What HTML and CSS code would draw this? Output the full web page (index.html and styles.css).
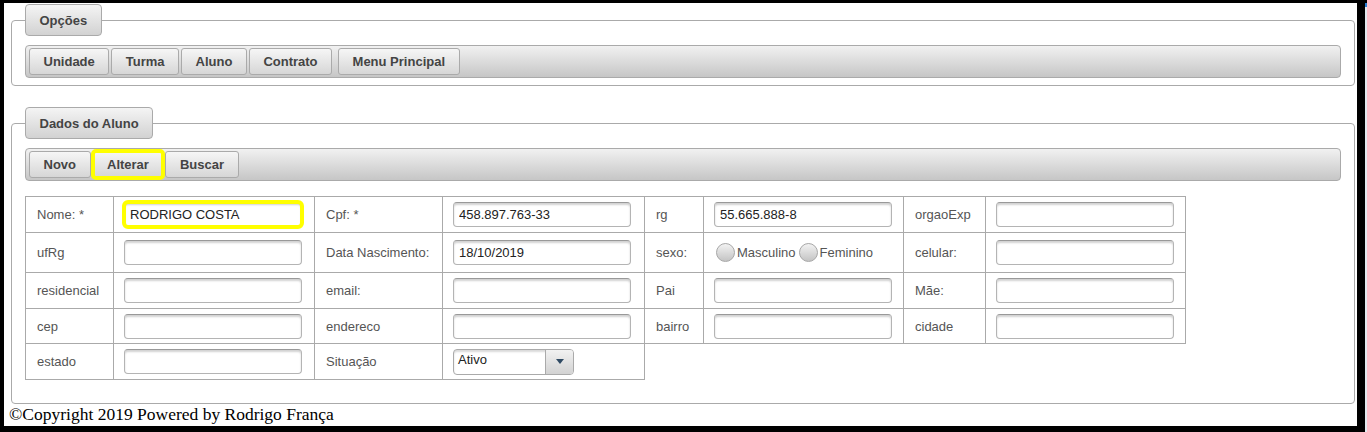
FILE: index.html
```html
<!DOCTYPE html>
<html lang="pt-BR">
<head>
<meta charset="utf-8">
<title>Dados do Aluno</title>
<link rel="stylesheet" href="styles.css">
</head>
<body>
<div class="page">
  <fieldset class="group">
    <legend class="legend">Opções</legend>
    <div class="toolbar">
      <div class="btnset">
        <button class="btn">Unidade</button>
        <button class="btn">Turma</button>
        <button class="btn">Aluno</button>
        <button class="btn">Contrato</button>
      </div>
      <button class="btn">Menu Principal</button>
    </div>
  </fieldset>

  <fieldset class="group group-dados">
    <legend class="legend">Dados do Aluno</legend>
    <div class="toolbar toolbar-dados">
      <div class="btnset">
        <button class="btn">Novo</button>
        <button class="btn btn-marked">Alterar</button>
        <button class="btn">Buscar</button>
      </div>
    </div>

    <table class="form-table">
      <colgroup>
        <col class="c1"><col class="c2"><col class="c3"><col class="c4">
        <col class="c5"><col class="c6"><col class="c7"><col class="c8">
      </colgroup>
      <tr class="r1">
        <td class="lbl">Nome: *</td>
        <td class="fld"><input class="txt txt-marked" type="text" value="RODRIGO COSTA"></td>
        <td class="lbl">Cpf: *</td>
        <td class="fld"><input class="txt" type="text" value="458.897.763-33"></td>
        <td class="lbl">rg</td>
        <td class="fld"><input class="txt" type="text" value="55.665.888-8"></td>
        <td class="lbl">orgaoExp</td>
        <td class="fld"><input class="txt" type="text" value=""></td>
      </tr>
      <tr class="r2">
        <td class="lbl">ufRg</td>
        <td class="fld"><input class="txt" type="text" value=""></td>
        <td class="lbl">Data Nascimento:</td>
        <td class="fld"><input class="txt" type="text" value="18/10/2019"></td>
        <td class="lbl">sexo:</td>
        <td class="fld">
          <span class="radios">
            <span class="radio"></span><span class="radio-text">Masculino</span>
            <span class="radio radio-second"></span><span class="radio-text">Feminino</span>
          </span>
        </td>
        <td class="lbl">celular:</td>
        <td class="fld"><input class="txt" type="text" value=""></td>
      </tr>
      <tr class="r3">
        <td class="lbl">residencial</td>
        <td class="fld"><input class="txt" type="text" value=""></td>
        <td class="lbl">email:</td>
        <td class="fld"><input class="txt" type="text" value=""></td>
        <td class="lbl">Pai</td>
        <td class="fld"><input class="txt" type="text" value=""></td>
        <td class="lbl">Mãe:</td>
        <td class="fld"><input class="txt" type="text" value=""></td>
      </tr>
      <tr class="r4">
        <td class="lbl">cep</td>
        <td class="fld"><input class="txt" type="text" value=""></td>
        <td class="lbl">endereco</td>
        <td class="fld"><input class="txt" type="text" value=""></td>
        <td class="lbl">bairro</td>
        <td class="fld"><input class="txt" type="text" value=""></td>
        <td class="lbl">cidade</td>
        <td class="fld"><input class="txt" type="text" value=""></td>
      </tr>
      <tr class="r5">
        <td class="lbl">estado</td>
        <td class="fld"><input class="txt" type="text" value=""></td>
        <td class="lbl">Situação</td>
        <td class="fld">
          <div class="select">
            <span class="select-text">Ativo</span>
            <span class="select-btn"><span class="caret"></span></span>
          </div>
        </td>
      </tr>
    </table>
  </fieldset>

  <div class="footer">©Copyright 2019 Powered by Rodrigo França</div>
</div>
<div class="gutter"></div>
<div class="strip"></div>
</body>
</html>
```

FILE: styles.css
```css
html, body {
  margin: 0;
  padding: 0;
}
body {
  background: #000;
  display: flex;
  align-items: flex-start;
  padding-top: 3px;
  height: 432px;
  box-sizing: border-box;
  overflow: hidden;
  font-family: "Liberation Sans", Arial, sans-serif;
}
.page {
  width: 1353px;
  height: 423px;
  margin-left: 4px;
  background: #fff;
  box-sizing: border-box;
  padding: 1px 2px 0 7px;
  flex: none;
}
.gutter {
  width: 8px;
  flex: none;
}
.strip {
  width: 2px;
  height: 429px;
  flex: none;
  background: linear-gradient(#2a7fd4 0, #2a7fd4 4px, #e3e9ef 4px);
}

/* fieldset groups */
.group {
  margin: 0;
  padding: 9px 13px 7px 13px;
  border: 1px solid #aaa;
  border-radius: 4px;
  min-width: 0;
}
.group-dados {
  margin-top: 21px;
  padding-bottom: 23px;
}
.legend {
  margin: 0;
  padding: 0 13.5px;
  height: 32px;
  box-sizing: border-box;
  border: 1px solid #aaa;
  border-radius: 4px;
  background: linear-gradient(#f4f4f4, #d2d2d2);
  color: #444;
  font: bold 13px/31px "Liberation Sans", Arial, sans-serif;
}

/* toolbar */
.toolbar {
  display: flex;
  align-items: center;
  gap: 6px;
  height: 33px;
  box-sizing: border-box;
  padding: 0 3px;
  border: 1px solid #aaa;
  border-radius: 4px;
  background: linear-gradient(#f1f1f1, #c6c6c6);
}
.btnset {
  display: flex;
  gap: 2px;
}
.btn {
  margin: 0;
  height: 27px;
  padding: 0 13.5px;
  border: 1px solid #aaa;
  border-radius: 3px;
  background: linear-gradient(#f6f6f6, #d6d6d6);
  color: #444;
  font: bold 13px "Liberation Sans", Arial, sans-serif;
}
.btn-marked {
  outline: 4px solid #ffff00;
  outline-offset: -2px;
}

/* form table */
.form-table {
  margin-top: 15px;
  border-collapse: collapse;
  table-layout: fixed;
  width: 1161px;
  color: #555;
  font-size: 13px;
}
.c1 { width: 88px; }
.c2 { width: 201px; }
.c3 { width: 128px; }
.c4 { width: 202px; }
.c5 { width: 59px; }
.c6 { width: 200px; }
.c7 { width: 82px; }
.c8 { width: 200px; }
.form-table td {
  border: 1px solid #aaa;
  padding: 0 0 0 11px;
  vertical-align: middle;
  white-space: nowrap;
}
.r1 { height: 36px; }
.r2 { height: 40px; }
.r3 { height: 36px; }
.r4 { height: 35px; }
.r5 { height: 36px; }
.form-table td.fld {
  padding-left: 10px;
}

.txt {
  display: block;
  width: 178px;
  height: 25px;
  box-sizing: border-box;
  margin: 0;
  padding: 0 5px;
  border: 1px solid #b4b4b4;
  border-top-color: #999;
  border-radius: 4px;
  box-shadow: inset 0 2px 2px rgba(0, 0, 0, 0.18);
  background: #fff;
  color: #222;
  font: 13px "Liberation Sans", Arial, sans-serif;
}
.txt-marked {
  outline: 4px solid #ffff00;
  outline-offset: -2px;
}

/* radios */
.radios {
  display: flex;
  align-items: center;
  color: #555;
}
.radio {
  width: 19px;
  height: 19px;
  box-sizing: border-box;
  border: 1px solid #a8a8a8;
  border-radius: 50%;
  background: linear-gradient(#f2f2f2, #c4c4c4);
  margin: 0 2px 0 2px;
  flex: none;
}
.radio-second {
  margin-left: 3px;
}

/* select */
.select {
  display: flex;
  width: 121px;
  height: 26px;
  box-sizing: border-box;
  border: 1px solid #aaa;
  border-radius: 4px;
  box-shadow: inset 0 2px 2px rgba(0, 0, 0, 0.15);
  overflow: hidden;
}
.select-text {
  flex: 1;
  padding: 1px 0 0 4px;
  line-height: 18px;
  color: #222;
}
.select-btn {
  width: 27px;
  flex: none;
  display: flex;
  align-items: center;
  justify-content: center;
  border-left: 1px solid #aaa;
  background: linear-gradient(#f2f2f2, #d2d2d2);
}
.caret {
  width: 0;
  height: 0;
  border-left: 4px solid transparent;
  border-right: 4px solid transparent;
  border-top: 5px solid #2f4a63;
}

/* footer */
.footer {
  margin-left: -2px;
  font: 17.5px/20px "Liberation Serif", "Times New Roman", serif;
  color: #000;
}
```
